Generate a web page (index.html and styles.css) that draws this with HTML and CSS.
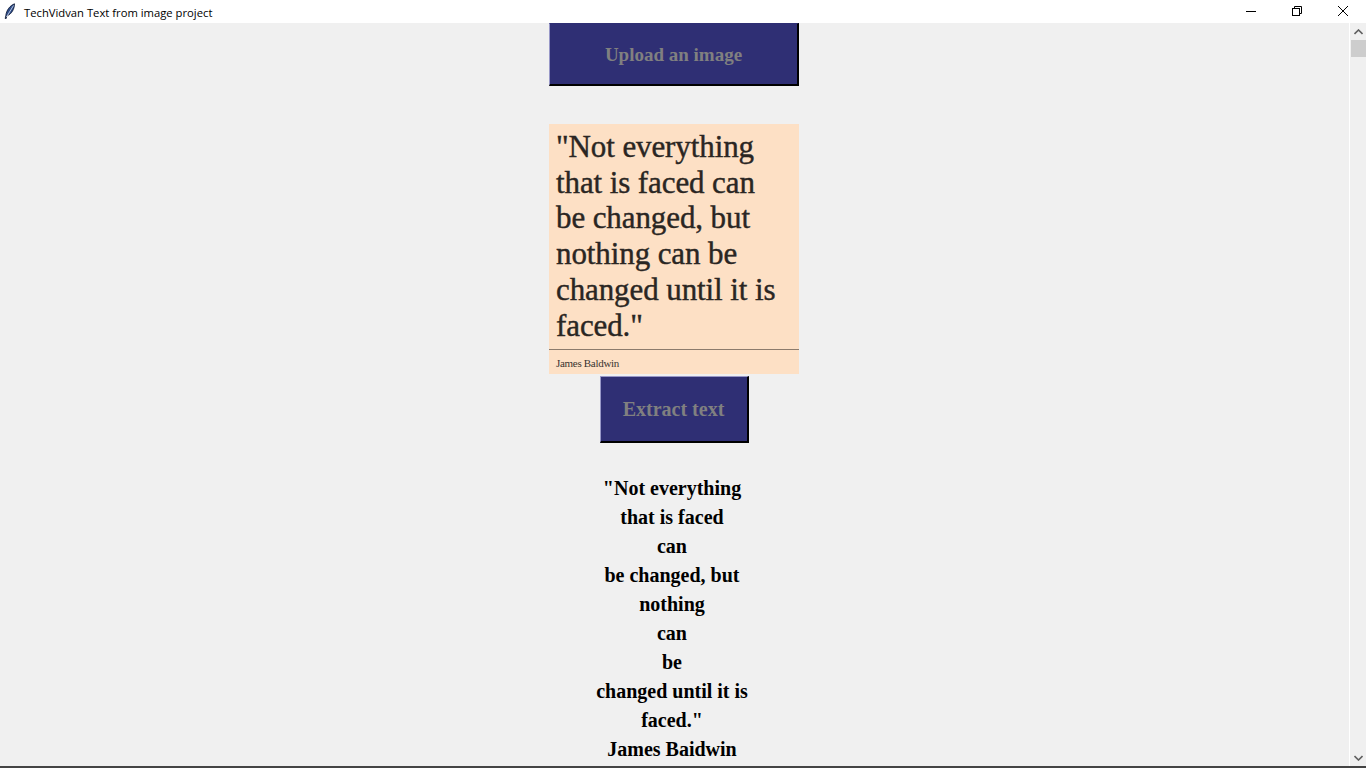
FILE: index.html
```html
<!DOCTYPE html>
<html>
<head>
<meta charset="utf-8">
<link rel="stylesheet" href="styles.css">
</head>
<body>
<div class="window">
  <div class="titlebar">
    <div class="title-left">
      <svg class="app-icon" width="12" height="16" viewBox="0 0 12 16">
        <path d="M10.5 0.8 C6 2.5 2.5 7 1.8 12.5 L1.2 15.5 L2.2 15.5 L2.9 12.8 C7.5 11.5 10.5 6 10.5 0.8 Z" fill="#2c4a86" stroke="#0b1530" stroke-width="0.8"/>
        <path d="M9.5 2.5 L2.5 14" stroke="#dfe8f7" stroke-width="0.8" fill="none"/>
      </svg>
      <span class="title-text">TechVidvan Text from image project</span>
    </div>
    <div class="controls">
      <div class="ctrl">
        <svg width="12" height="12" viewBox="0 0 12 12"><path d="M1 6.5 H11" stroke="#000" stroke-width="1"/></svg>
      </div>
      <div class="ctrl">
        <svg width="12" height="12" viewBox="0 0 12 12"><rect x="1.5" y="3.5" width="7" height="7" fill="none" stroke="#000"/><path d="M3.5 3.5 V1.5 H10.5 V8.5 H8.5" fill="none" stroke="#000"/></svg>
      </div>
      <div class="ctrl">
        <svg width="12" height="12" viewBox="0 0 12 12"><path d="M1 1 L11 11 M11 1 L1 11" stroke="#000" stroke-width="1"/></svg>
      </div>
    </div>
  </div>
  <div class="body">
    <div class="content">
      <button class="tk-btn upload">Upload an image</button>
      <div class="quote-image">
        <div class="quote-text">"Not everything<br>that is faced can<br>be changed, but<br>nothing can be<br>changed until it is<br>faced."</div>
        <div class="quote-rule"></div>
        <div class="quote-author">James Baldwin</div>
      </div>
      <button class="tk-btn extract">Extract text</button>
      <div class="output">
        <div>"Not everything</div>
        <div>that is faced</div>
        <div>can</div>
        <div>be changed, but</div>
        <div>nothing</div>
        <div>can</div>
        <div>be</div>
        <div>changed until it is</div>
        <div>faced."</div>
        <div>James Baidwin</div>
      </div>
    </div>
    <div class="scrollbar">
      <div class="arrow up">
        <svg width="9" height="6" viewBox="0 0 9 6"><path d="M0.5 5 L4.5 1 L8.5 5" fill="none" stroke="#606060" stroke-width="1.6"/></svg>
      </div>
      <div class="thumb"></div>
      <div class="track"></div>
      <div class="arrow down">
        <svg width="9" height="6" viewBox="0 0 9 6"><path d="M0.5 1 L4.5 5 L8.5 1" fill="none" stroke="#606060" stroke-width="1.6"/></svg>
      </div>
    </div>
  </div>
  <div class="bottom-edge"></div>
</div>
</body>
</html>
```
FILE: styles.css
```css
* { box-sizing: border-box; }
html, body { margin: 0; padding: 0; }
body {
  width: 1366px;
  height: 768px;
  overflow: hidden;
  background: #f0f0f0;
}
.window {
  display: flex;
  flex-direction: column;
  height: 768px;
}
.titlebar {
  height: 23px;
  background: #ffffff;
  display: flex;
  justify-content: space-between;
  align-items: center;
  flex: 0 0 auto;
}
.title-left {
  display: flex;
  align-items: center;
  padding-left: 4px;
}
.app-icon { margin-right: 8px; margin-top: -1px; }
.title-text {
  font-family: "Open Sans", "Noto Sans", sans-serif;
  font-size: 11.25px;
  color: #000;
  position: relative;
  top: 1px;
}
.controls {
  display: flex;
  height: 23px;
}
.ctrl {
  width: 46px;
  height: 23px;
  display: flex;
  align-items: center;
  justify-content: center;
  padding-bottom: 2px;
}
.body {
  flex: 1 1 auto;
  display: flex;
  min-height: 0;
}
.content {
  flex: 1 1 auto;
  display: flex;
  flex-direction: column;
  align-items: center;
  overflow: hidden;
  background: #f0f0f0;
  padding-right: 1px;
}
.tk-btn {
  background: #2f2f74;
  color: #808080;
  font-family: "Liberation Serif", "Times New Roman", serif;
  font-weight: bold;
  font-size: 20px;
  border-style: solid;
  border-width: 1px 2px 2px 1px;
  border-color: #9898c8 #000 #000 #9898c8;
  padding: 0;
  margin: 0;
  display: flex;
  align-items: center;
  justify-content: center;
}
.upload {
  width: 250px;
  height: 63px;
  border-top-color: #2f2f74;
  font-size: 19px;
  padding-top: 2px;
}
.extract {
  width: 149px;
  height: 67px;
  margin-top: 2px;
  padding-top: 1px;
}
.quote-image {
  margin-top: 38px;
  width: 250px;
  height: 250px;
  background: #fde0c5;
  display: flex;
  flex-direction: column;
}
.quote-text {
  font-family: "Liberation Serif", "Times New Roman", serif;
  font-size: 31px;
  line-height: 35.7px;
  letter-spacing: -0.1px;
  color: #2a2623;
  padding: 5px 0 0 7px;
  height: 225px;
  -webkit-text-stroke: 0.4px #2a2623;
}
.quote-rule {
  height: 1px;
  background: #8c7b6c;
}
.quote-author {
  font-family: "Liberation Serif", "Times New Roman", serif;
  font-size: 11px;
  letter-spacing: -0.3px;
  color: #3a3430;
  padding: 7px 0 0 7px;
}
.output {
  margin-top: 31px;
  font-family: "Liberation Serif", "Times New Roman", serif;
  font-weight: bold;
  font-size: 20px;
  line-height: 29px;
  color: #000;
  text-align: center;
  margin-right: 4px;
}
.scrollbar {
  flex: 0 0 17px;
  width: 17px;
  background: #f0f0f0;
  border-left: 1px solid #ffffff;
  display: flex;
  flex-direction: column;
  align-items: center;
}
.arrow {
  height: 17px;
  width: 16px;
  display: flex;
  align-items: center;
  justify-content: center;
}
.thumb {
  width: 15px;
  height: 17px;
  background: #cdcdcd;
}
.track { flex: 1 1 auto; }
.bottom-edge {
  height: 2px;
  background: #444444;
  flex: 0 0 auto;
}
```
